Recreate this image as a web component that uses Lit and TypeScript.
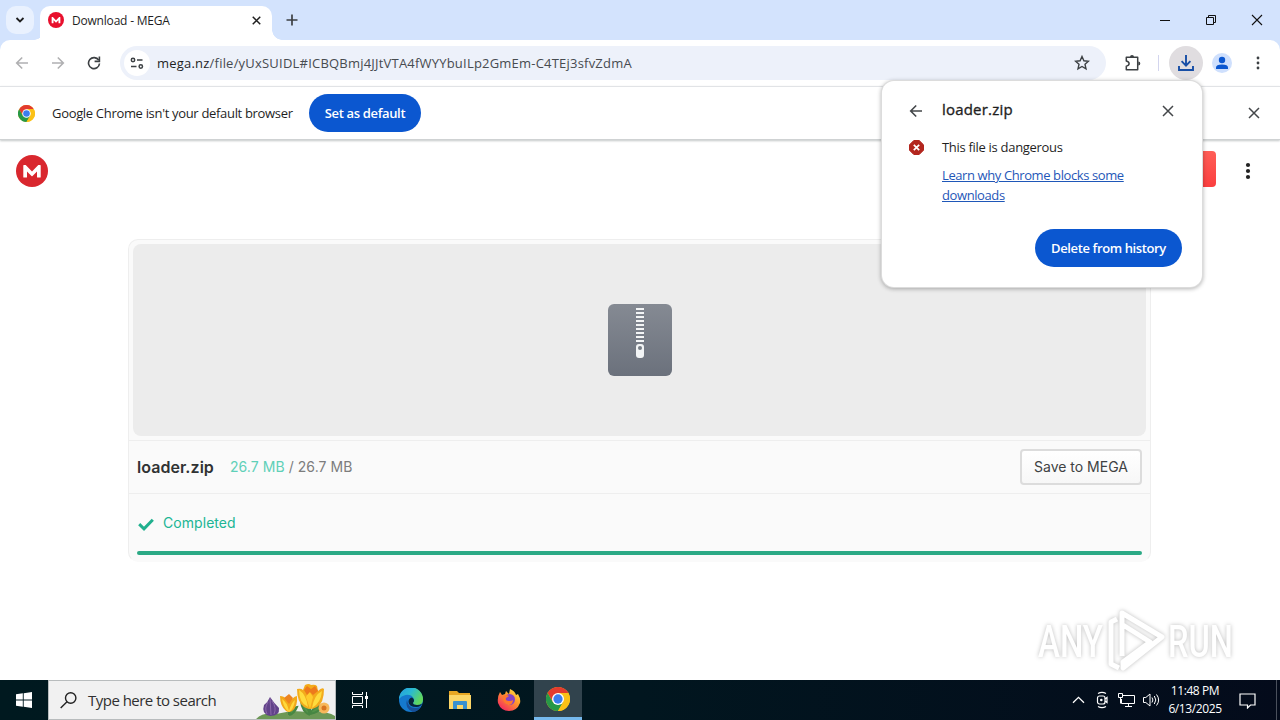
import { LitElement, css, html, svg } from "lit";
import { customElement } from "lit/decorators.js";

const megaLogo = (size: number, color: string) => html`
  <svg width=${size} height=${size} viewBox="0 0 32 32">
    <circle cx="16" cy="16" r="16" fill=${color} />
    <path
      fill="#fff"
      d="M7.3 22V10.6q0-.6.6-.6h1.8l6.3 6.4L22.3 10h1.8q.6 0 .6.6V22q0 .5-.5.5h-2.700q-.5 0-.5-.5v-5.500l-4.500 4.500q-.5.5-1 0L11 16.500V22q0 .5-.5.5H7.800q-.5 0-.5-.5z"
    />
  </svg>
`;

const chromeLogo = (size: number) => html`
  <svg width=${size} height=${size} viewBox="0 0 48 48">
    <circle cx="24" cy="24" r="24" fill="#fbc116" />
    <path fill="#e33b2e" d="M3.200 12A24 24 0 0 1 44.800 12H24L14 30z" />
    <path fill="#279847" d="M3.200 12A24 24 0 0 0 24 48L34.400 30 24 34 13.600 30z" />
    <path fill="#fbc116" d="M24 48A24 24 0 0 0 44.800 12H24L34.400 30z" />
    <circle cx="24" cy="24" r="12" fill="#fff" />
    <circle cx="24" cy="24" r="9.300" fill="#3b7ded" />
  </svg>
`;

const cross = (size: number, color: string, width = 1.6) => html`
  <svg width=${size} height=${size} viewBox="0 0 12 12">
    <path d="M1 1l10 10M11 1L1 11" stroke=${color} stroke-width=${width} fill="none" />
  </svg>
`;

const arrowBack = (color: string) => html`
  <svg width="14" height="14" viewBox="0 0 14 14">
    <path d="M13 7H2M7.200 1.500L1.700 7l5.500 5.500" stroke=${color} stroke-width="1.600" fill="none" />
  </svg>
`;

const dots = (color: string, r: number, gap: number) => html`
  <svg width="6" height="20" viewBox="-3 -10 6 20" fill=${color}>
    <circle cy=${-gap} r=${r} />
    <circle r=${r} />
    <circle cy=${gap} r=${r} />
  </svg>
`;

@customElement("browser-frame")
export class BrowserFrame extends LitElement {
  static styles = css`
    :host {
      display: block;
      color: #1f1f1f;
      font-family: "Open Sans", "Noto Sans", sans-serif;
    }

    svg {
      display: block;
      flex: none;
    }

    .tabstrip {
      display: flex;
      height: 34px;
      padding: 6px 0 0 6px;
      background: #d3e3fd;
    }

    .tab-search {
      display: grid;
      place-items: center;
      width: 28px;
      height: 28px;
      border-radius: 10px;
      background: #e9f1fe;
    }

    .flare {
      align-self: flex-end;
      width: 10px;
      height: 10px;
      background: radial-gradient(circle at 0 0, #d3e3fd 9.5px, #fff 10px);
    }

    .flare.right {
      background: radial-gradient(circle at 100% 0, #d3e3fd 9.5px, #fff 10px);
    }

    .tab {
      display: flex;
      align-items: center;
      width: 213px;
      height: 34px;
      margin-left: -4px;
      padding: 0 11px 0 8px;
      border-radius: 10px 10px 0 0;
      background: #fff;
    }

    .tab-title {
      flex: 1;
      margin-left: 8px;
      padding-bottom: 6px;
      font-size: 12px;
      letter-spacing: -0.2px;
    }

    .tab svg {
      margin-bottom: 6px;
    }

    .new-tab {
      margin: 8px 0 0 4px;
    }

    .window-buttons {
      display: flex;
      height: 28px;
      margin: 0 0 0 auto;
    }

    .window-buttons span {
      display: grid;
      place-items: center;
      width: 46px;
    }

    .corners {
      background: #d3e3fd;
    }

    .toolbar {
      display: flex;
      align-items: center;
      height: 46px;
      box-sizing: border-box;
      padding: 0 0 0 15px;
      border-radius: 10px 10px 0 0;
      background: #fff;
    }

    .nav {
      display: flex;
      align-items: center;
      gap: 22px;
      width: 105px;
    }

    .forward {
      transform: scaleX(-1);
    }

    .omnibox {
      display: flex;
      align-items: center;
      width: 986px;
      height: 34px;
      box-sizing: border-box;
      padding: 0 16px 0 4px;
      border-radius: 17px;
      background: #edf1fa;
    }

    .site-info {
      display: grid;
      place-items: center;
      width: 26px;
      height: 26px;
      border-radius: 50%;
      background: #fff;
    }

    .url {
      flex: 1;
      margin-left: 7px;
      font-size: 13px;
      letter-spacing: 0.21px;
      white-space: nowrap;
      color: #474b50;
    }

    .url b {
      font-weight: 400;
      color: #1f1f1f;
    }

    .puzzle {
      margin-left: 18px;
    }

    .separator {
      width: 1px;
      height: 16px;
      margin-left: 17px;
      background: #d3d5ee;
    }

    .download {
      display: grid;
      place-items: center;
      width: 34px;
      height: 34px;
      margin-left: 10px;
      border-radius: 50%;
      background: #e0dde0;
    }

    .avatar {
      margin: 0 23px 0 9px;
    }

    .infobar {
      display: flex;
      align-items: center;
      height: 54px;
      box-sizing: border-box;
      padding: 0 20px 0 18px;
      border-top: 1px solid #e1e3e6;
      border-bottom: 1px solid #cfd2d3;
      box-shadow: 0 1px 2px #c4c7c8;
    }

    .infobar-text {
      width: 257px;
      margin-left: 17px;
      font-size: 13px;
      letter-spacing: -0.32px;
      white-space: nowrap;
    }

    .default-button {
      width: 112px;
      height: 38px;
      border-radius: 19px;
      background: #0b57d0;
      color: #fff;
      font-size: 13px;
      font-weight: 600;
      letter-spacing: -0.35px;
      line-height: 38px;
      text-align: center;
    }

    .dismiss {
      margin-left: auto;
    }
  `;

  render() {
    return html`
      <div class="tabstrip">
        <div class="tab-search">
          <svg width="10" height="8" viewBox="0 0 10 8">
            <path d="M1.500 2L5 5.500 8.500 2" stroke="#1f1f1f" stroke-width="1.800" fill="none" />
          </svg>
        </div>
        <div class="flare"></div>
        <div class="tab">
          ${megaLogo(16, "#e8102d")}
          <span class="tab-title">Download - MEGA</span>
          ${cross(9, "#1f1f1f", 2)}
        </div>
        <div class="flare right"></div>
        <svg class="new-tab" width="12" height="12" viewBox="0 0 12 12">
          <path d="M6 .5v11M.5 6h11" stroke="#3c4043" stroke-width="1.700" />
        </svg>
        <div class="window-buttons">
          <span>
            <svg width="10" height="10" viewBox="0 0 10 10"><path d="M0 5.500h10" stroke="#111" /></svg>
          </span>
          <span>
            <svg width="10" height="10" viewBox="0 0 10 10">
              <path d="M.5 2.500h7v7h-7zM2.500 2.500v-2h7v7h-2" stroke="#111" fill="none" />
            </svg>
          </span>
          <span>${cross(12, "#111", 1.1)}</span>
        </div>
      </div>
      <div class="corners">
        <div class="toolbar">
          <div class="nav">
            ${arrowBack("#b0b0b2")}
            <span class="forward">${arrowBack("#b0b0b2")}</span>
            <svg width="14" height="14" viewBox="0 0 14 14">
              <path d="M11.700 4.200A5.500 5.500 0 1 0 12.500 7.500" stroke="#3c4043" stroke-width="1.600" fill="none" />
              <path d="M12.400.6v4.800H7.600" stroke="#3c4043" stroke-width="1.600" fill="none" />
            </svg>
          </div>
          <div class="omnibox">
            <div class="site-info">
              <svg width="14" height="12" viewBox="0 0 14 12" stroke="#3c4043" stroke-width="1.500" fill="none">
                <circle cx="3" cy="3" r="1.700" />
                <path d="M7 3h5.500M1 9.500h5.500" />
                <circle cx="10.800" cy="9.500" r="1.700" />
              </svg>
            </div>
            <span class="url"><b>mega.nz</b>/file/yUxSUIDL#ICBQBmj4JJtVTA4fWYYbuILp2GmEm-C4TEj3sfvZdmA</span>
            <svg width="16" height="16" viewBox="0 0 16 16">
              <path
                d="M8 1.500l1.900 4.300 4.600.4L11 9.300l1 4.600-4-2.400-4 2.400 1-4.600L1.500 6.200l4.600-.4z"
                stroke="#3c4043" stroke-width="1.400" fill="none"
              />
            </svg>
          </div>
          <svg class="puzzle" width="17" height="18" viewBox="0 0 17 18">
            <path
              d="M2.300 3.300h11.400v12.400H2.300v-3.500q2.800-.6 2.800-2.600T2.300 7z"
              stroke="#3c4043" stroke-width="1.500" fill="none" stroke-linejoin="round"
            />
            <path d="M6 3a2 2 0 0 1 4 0zM14.300 7.600a2 2 0 0 1 0 4z" fill="#3c4043" />
          </svg>
          <div class="separator"></div>
          <div class="download">
            <svg width="16" height="16" viewBox="0 0 16 16">
              <path d="M8 0v10.500M3.600 6.200L8 10.600l4.400-4.400M1 11v4h14v-4" stroke="#174ea6" stroke-width="1.900" fill="none" />
            </svg>
          </div>
          <svg class="avatar" width="20" height="20" viewBox="0 0 20 20">
            <circle cx="10" cy="10" r="10" fill="#cfe0fd" />
            <circle cx="10" cy="7" r="3.200" fill="#0b57d0" />
            <path d="M4 16v-1.600q0-3 6-3t6 3V16z" fill="#0b57d0" />
          </svg>
          ${dots("#3c4043", 1.4, 5)}
        </div>
      </div>
      <div class="infobar">
        ${chromeLogo(17)}
        <span class="infobar-text">Google Chrome isn't your default browser</span>
        <div class="default-button">Set as default</div>
        <span class="dismiss">${cross(12, "#44474a", 1.5)}</span>
      </div>
    `;
  }
}

@customElement("mega-page")
export class MegaPage extends LitElement {
  static styles = css`
    :host {
      display: block;
      position: relative;
      background: #fff;
      font-family: Inter, sans-serif;
    }

    svg {
      display: block;
    }

    .header {
      display: flex;
      align-items: center;
      height: 62px;
      padding: 0 29px 0 16px;
    }

    .red-button {
      width: 100px;
      height: 36px;
      margin: -4px 29px 0 auto;
      border-radius: 4px;
      background: linear-gradient(#ff5e57, #fb3f3f);
    }

    .card {
      width: 1023px;
      height: 323px;
      box-sizing: border-box;
      margin: 37px 0 0 128px;
      border: 1px solid #eee;
      border-bottom-color: #fafafa;
      border-radius: 10px;
      background: #fafafa;
    }

    .preview {
      display: grid;
      place-items: center;
      height: 192px;
      margin: 4px;
      border-radius: 8px;
      background: #ececec;
    }

    .file-row {
      display: flex;
      align-items: center;
      height: 52px;
      padding: 0 8px;
      border: solid #eee;
      border-width: 1px 0;
    }

    .name {
      width: 93px;
      color: #303233;
      font-size: 16px;
      font-weight: 600;
      letter-spacing: 0.05px;
    }

    .size {
      margin-top: -2px;
      color: #7d7d7d;
      font-size: 14px;
      letter-spacing: 0.06px;
    }

    .size .done {
      color: #5fd0b8;
    }

    .save {
      width: 122px;
      height: 36px;
      box-sizing: border-box;
      margin-left: auto;
      border: 2px solid #dcdcdc;
      border-radius: 4px;
      background: linear-gradient(#fff, #f7f7f7);
      color: #404243;
      font-size: 14px;
      line-height: 32px;
      text-align: center;
    }

    .status {
      display: flex;
      align-items: center;
      gap: 9px;
      height: 57px;
      padding: 0 9px;
      color: #20b594;
      font-size: 14px;
      letter-spacing: 0.06px;
    }

    .status svg {
      margin-top: 4px;
    }

    .progress {
      height: 4px;
      margin: 0 8px;
      border-radius: 2px;
      background: #2ba985;
    }

    .watermark {
      position: absolute;
      left: 1030px;
      top: 463px;
      filter: drop-shadow(0 0 2px #bdbdbd);
      font-family: Roboto, sans-serif;
    }
  `;

  render() {
    return html`
      <div class="header">
        ${megaLogo(32, "#d9272e")}
        <div class="red-button"></div>
        ${dots("#222", 2.1, 6)}
      </div>
      <div class="card">
        <div class="preview">
          <svg width="64" height="72" viewBox="0 0 64 72">
            <defs>
              <linearGradient id="zip" x2="0" y2="1">
                <stop stop-color="#858a93" />
                <stop offset="1" stop-color="#6b717c" />
              </linearGradient>
            </defs>
            <rect width="64" height="72" rx="6" fill="url(#zip)" />
            ${[4, 8, 12, 16, 20, 24, 28, 32, 36].map(
              (y) => svg`<rect x="28" y=${y} width="8" height="2" fill="#f2f4f5" />`
            )}
            <rect x="28" y="40" width="8" height="14" rx="3" fill="#f2f4f5" />
            <circle cx="32" cy="44" r="2" fill="#777d85" />
          </svg>
        </div>
        <div class="file-row">
          <span class="name">loader.zip</span>
          <span class="size"><span class="done">26.7 MB</span> / 26.7 MB</span>
          <div class="save">Save to MEGA</div>
        </div>
        <div class="status">
          <svg width="16" height="13" viewBox="0 0 16 13">
            <path d="M1.200 6.200L6 10.800 14.800 1.700" stroke="#20b08e" stroke-width="3" fill="none" />
          </svg>
          <span>Completed</span>
        </div>
        <div class="progress"></div>
      </div>
      <svg class="watermark" width="240" height="76" viewBox="0 0 240 76">
        <g fill="#fff" font-size="44" font-weight="500">
          <text x="8" y="54" textLength="65" lengthAdjust="spacingAndGlyphs">ANY</text>
          <text x="138" y="54" textLength="65" lengthAdjust="spacingAndGlyphs">RUN</text>
        </g>
        <g fill="none" stroke="#fff" stroke-width="5" stroke-linejoin="round">
          <path d="M87 16l-6 3v42l8 4" />
          <path d="M92 53V10l40 24-39 31v-6l27-20-27-17" />
        </g>
      </svg>
    `;
  }
}

@customElement("download-bubble")
export class DownloadBubble extends LitElement {
  static styles = css`
    :host {
      display: flex;
      flex-direction: column;
      width: 320px;
      height: 206px;
      box-sizing: border-box;
      padding: 18px 20px 20px 27px;
      border-radius: 12px;
      background: #fff;
      box-shadow: 0 0 0 1px #dcdcdc, 0 1px 4px 1px rgba(0, 0, 0, 0.3);
      color: #1f1f1f;
      font-family: "Open Sans", "Noto Sans", sans-serif;
      font-size: 13px;
    }

    svg {
      display: block;
    }

    .title-row,
    .warning {
      display: flex;
      align-items: center;
    }

    .title-row {
      height: 24px;
    }

    .title {
      flex: 1;
      margin: -4px 0 0 19px;
      font-size: 15px;
      letter-spacing: 0.2px;
      -webkit-text-stroke: 0.35px #1f1f1f;
    }

    .close {
      margin-right: 8px;
    }

    .warning {
      gap: 18px;
      height: 20px;
      margin-top: 14px;
      letter-spacing: -0.3px;
    }

    .learn {
      width: 200px;
      margin: 8px 0 0 33px;
      color: #1f57b8;
      letter-spacing: -0.4px;
      line-height: 20px;
      text-decoration: underline;
    }

    .delete {
      width: 147px;
      height: 38px;
      margin: auto 0 0 auto;
      border-radius: 19px;
      background: #0b57d0;
      color: #fff;
      font-weight: 600;
      letter-spacing: -0.38px;
      line-height: 38px;
      text-align: center;
    }
  `;

  render() {
    return html`
      <div class="title-row">
        ${arrowBack("#44474a")}
        <span class="title">loader.zip</span>
        <span class="close">${cross(12, "#44474a", 1.5)}</span>
      </div>
      <div class="warning">
        <svg width="15" height="15" viewBox="0 0 15 15">
          <path d="M4.800.5h5.400l4.300 4.300v5.400l-4.300 4.300H4.800L.5 10.200V4.800z" fill="#b3261e" stroke="#b3261e" stroke-linejoin="round" />
          <path d="M4.800 4.800l5.400 5.400M10.200 4.800l-5.400 5.400" stroke="#fff" stroke-width="1.700" />
        </svg>
        <span>This file is dangerous</span>
      </div>
      <div class="learn">Learn why Chrome blocks some downloads</div>
      <div class="delete">Delete from history</div>
    `;
  }
}

@customElement("task-bar")
export class TaskBar extends LitElement {
  static styles = css`
    :host {
      display: flex;
      align-items: stretch;
      height: 40px;
      background: linear-gradient(90deg, #00191f, #01161f 50%, #040b1b);
      color: #fff;
      font-family: "Open Sans", "Noto Sans", sans-serif;
    }

    svg {
      display: block;
      flex: none;
    }

    .start,
    .app {
      display: grid;
      place-items: center;
      width: 48px;
    }

    .search {
      display: flex;
      align-items: center;
      width: 288px;
      box-sizing: border-box;
      padding-left: 11px;
      border: 1px solid #b8bcbd;
      background: #f1f1f1;
      color: #303030;
      font-size: 15px;
    }

    .placeholder {
      flex: 1;
      margin-left: 11px;
      letter-spacing: -0.52px;
      white-space: nowrap;
    }

    .app {
      width: 49px;
    }

    .app.first {
      width: 50px;
      padding-right: 2px;
      box-sizing: border-box;
    }

    .app.active {
      width: 48px;
      height: 37px;
      margin-left: 1px;
      border-bottom: 3px solid #76b9ed;
      background: #31434d;
    }

    .tray {
      display: flex;
      align-items: center;
      gap: 7px;
      margin-left: auto;
    }

    .chevron {
      margin-right: 1px;
    }

    .clock {
      width: 56px;
      font-size: 12px;
      letter-spacing: -0.4px;
      line-height: 18px;
      text-align: center;
      white-space: nowrap;
    }

    .notice {
      margin: 2px 20px 0 9px;
    }

    .peek {
      width: 3px;
      height: 40px;
      border-left: 1px solid #4a505c;
      margin-left: -7px;
    }
  `;

  render() {
    return html`
      <div class="start">
        <svg width="16" height="16" viewBox="0 0 16 16" fill="#fff">
          <path d="M0 2.300l6.800-1v6.200H0zM7.700 1.200L16 0v7.500H7.700zM0 8.400h6.800v6.300L0 13.700zM7.700 8.400H16V16l-8.300-1.200z" />
        </svg>
      </div>
      <div class="search">
        <svg width="17" height="17" viewBox="0 0 17 17" fill="none" stroke="#222" stroke-width="1.400">
          <circle cx="10.700" cy="6" r="5.200" />
          <path d="M7 9.700L.7 16" />
        </svg>
        <span class="placeholder">Type here to search</span>
        <svg width="80" height="38" viewBox="0 0 80 38">
          <path d="M1 38q7-7 20-5 16-4 30-2 20-2 29 4v3z" fill="#6c9856" />
          <path d="M34 34V20M55 34V14M55 33q9-2 16-9-13 0-16 9M55 34q-8-3-9-14 7 5 9 14M34 34q5-1 8-8-7 1-8 8" stroke="#478643" stroke-width="2" fill="#55954b" />
          <path d="M15 16q-2 5-6 8-3 9 6 11 10 0 9-8-5-5-9-11" fill="#62438a" />
          <path d="M15 17l1 17M13 21q-4 6-1 12M17 20q5 7 2 13" stroke="#8b69a9" fill="none" />
          <path d="M25 15q4 0 6 3l3-4 3 4q3-3 5-3 1 11-5 15-3 2-6 0-6-5-6-15" fill="#f3a81a" />
          <path d="M27 18q5 3 7 12 2-8 6-11-1 9-6 12-5-3-7-13" fill="#ffd83d" />
          <path d="M29 17l5-4 4 4-4 6z" fill="#ed8420" />
          <path d="M42 8q4-1 6 1l2-5q4-2 6 0 4-1 6 1l1 5q4-4 6-2 0 14-7 18-7 4-13 0-7-5-7-18" fill="#f3ab1c" />
          <path d="M44 9q7 4 9 17Q44 22 44 9M67 10q-8 4-10 17 9-5 10-17" fill="#ffdc3e" />
          <path d="M54 10l4 6-3 12-4-12z" fill="#ffcb2c" />
          <path d="M49 9l3-4 4 3 4-3 3 5-5 4-3-3-3 3z" fill="#ed7a1c" />
          <circle cx="69" cy="27" r="5.500" fill="#f7b85b" />
          <circle cx="69" cy="27" r="2.500" fill="#d87520" />
        </svg>
      </div>
      <div class="app first">
        <svg width="18" height="16" viewBox="0 0 18 16" stroke="#fff" fill="none">
          <path d="M1.500 4.500h10v7h-10zM1.500 0v2.500h10V0M1.500 16v-2.500h10V16M15.500 0v16" />
          <path d="M14 4h3v3h-3z" fill="#fff" stroke="none" />
        </svg>
      </div>
      <div class="app">
        <svg width="24" height="24" viewBox="0 0 24 24">
          <defs>
            <linearGradient id="edge" y2=".5">
              <stop stop-color="#259ce0" />
              <stop offset=".5" stop-color="#2ab9d2" />
              <stop offset="1" stop-color="#61d75c" />
            </linearGradient>
          </defs>
          <circle cx="12" cy="12" r="12" fill="#1579ce" />
          <path d="M0 11A12 12 0 0 1 24 11.500q0 5.500-6 5.500-4 0-4-2.200 2-2 .6-4.500Q12 6 6.500 7 2 8 0 11" fill="url(#edge)" />
          <path d="M8 11.500Q5 20 14 24q5-.5 8-5-13 4-14-7.500" fill="#174f98" />
          <path d="M9.500 14q0-4 3.500-4.500 3.500 2.500 1 5.300 0 2.200 4 2.200 3 0 5-1.300-1 3-5.500 3.300-7.500 0-8-5" fill="#07243c" />
        </svg>
      </div>
      <div class="app">
        <svg width="22" height="20" viewBox="0 0 22 20">
          <path d="M0 1h8l2 2h11v5H0z" fill="#e8a723" />
          <path d="M0 5h22v14H0z" fill="#fcd667" />
          <path d="M4 19v-7q0-1 1-1h12q1 0 1 1v7h-4v-4H8v4z" fill="#3a91cf" />
        </svg>
      </div>
      <div class="app">
        <svg width="24" height="24" viewBox="0 0 24 24">
          <defs>
            <linearGradient id="fox" x1="1" x2=".2" y2="1">
              <stop stop-color="#fff04a" />
              <stop offset=".45" stop-color="#ff9a2b" />
              <stop offset="1" stop-color="#f32362" />
            </linearGradient>
          </defs>
          <path d="M3 4l2 3 3-1 1-3 3 3 1-5q5 2 6 6l2-1q3 5 2 9Q20 23 12 23T1 15Q0 9 3 4" fill="url(#fox)" />
          <circle cx="12.500" cy="11.500" r="5.500" fill="#8442c6" />
          <path d="M6 8q3-2 6 0l-3 2q-1 3 3 3 3 0 4-1 0 5-5 5-6-2-5-9" fill="#ff782d" />
        </svg>
      </div>
      <div class="app active">${chromeLogo(24)}</div>
      <div class="tray">
        <svg class="chevron" width="13" height="8" viewBox="0 0 13 8" fill="none" stroke="#fff" stroke-width="1.300">
          <path d="M1 6.800l5.500-5.500L12 6.800" />
        </svg>
        <svg width="18" height="18" viewBox="0 0 18 18" fill="none" stroke="#fff" stroke-width="1.200">
          <rect x="4.500" y="5" width="7.500" height="8" rx="2" />
          <path d="M12 8l2-1.500v5L12 10M5 2.500Q9 .3 13 2.500M5 15.500q4 2.200 8 0" />
          <circle cx="8.300" cy="9" r=".7" />
        </svg>
        <svg width="17" height="16" viewBox="0 0 17 16" fill="none" stroke="#fff">
          <path d="M5 3.500h11.500v8H3.500V7M7 14.500h7M10.500 11.500v3M.5 1.500h4v4h-4zM2.500 5.500v6" />
        </svg>
        <svg width="18" height="16" viewBox="0 0 18 16" fill="none" stroke="#fff">
          <path d="M1.500 5.500h2.300L8 2v12l-4.200-3.500H1.500zM10 5.500q1.800 2.500 0 5M12.300 4q3 4 0 8M14.500 2.500q4.300 5.500 0 11" />
        </svg>
        <div class="clock">11:48 PM<br />6/13/2025</div>
        <svg class="notice" width="17" height="16" viewBox="0 0 17 16" fill="none" stroke="#fff" stroke-width="1.200">
          <path d="M1 1h15v11h-4.500l-3 3v-3H1z" />
        </svg>
        <div class="peek"></div>
      </div>
    `;
  }
}

@customElement("app-root")
export class AppRoot extends LitElement {
  static styles = css`
    :host {
      display: flex;
      flex-direction: column;
      position: relative;
      width: 1280px;
      height: 720px;
      overflow: hidden;
      background: #fff;
    }

    mega-page {
      flex: 1;
    }

    browser-frame {
      position: relative;
      z-index: 1;
    }

    download-bubble {
      position: absolute;
      z-index: 2;
      left: 882px;
      top: 81px;
    }
  `;

  render() {
    return html`
      <browser-frame></browser-frame>
      <mega-page></mega-page>
      <download-bubble></download-bubble>
      <task-bar></task-bar>
    `;
  }
}
